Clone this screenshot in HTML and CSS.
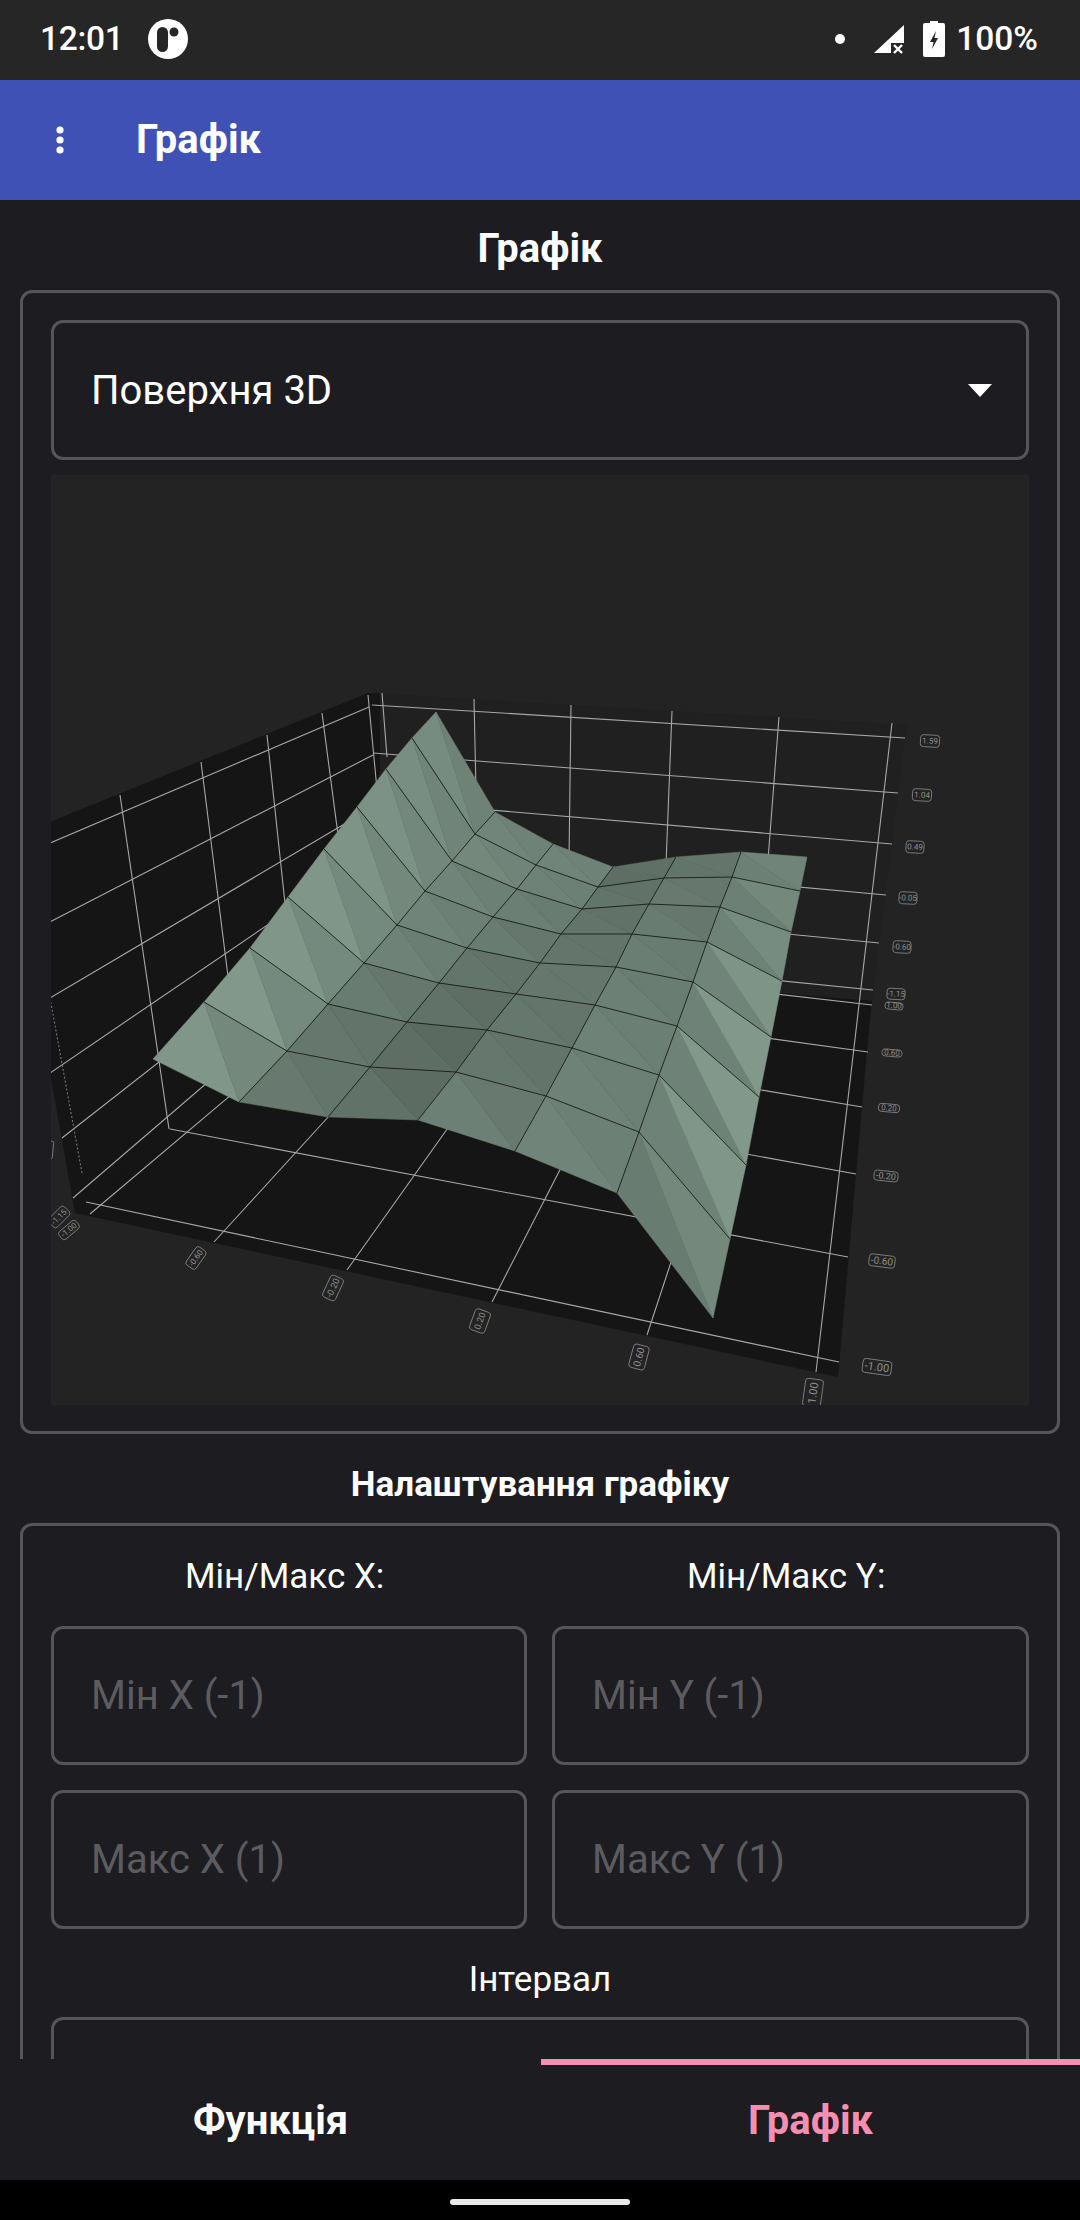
FILE: index.html
```html
<!DOCTYPE html>
<html lang="uk">
<head>
<meta charset="utf-8">
<title>Графік</title>
<link rel="stylesheet" href="styles.css">
</head>
<body>
<div class="phone">
  <header class="status">
    <div class="status-left">
      <span class="time">12:01</span>
      <svg class="logo" viewBox="0 0 40 40" width="40" height="40"><circle cx="20" cy="20" r="20" fill="#fff"/><rect x="9" y="8" width="11" height="25" rx="5.5" fill="#262626"/><circle cx="26" cy="13" r="4.5" fill="#262626"/></svg>
    </div>
    <div class="status-right">
      <svg class="dot" viewBox="0 0 10 10" width="10" height="10"><circle cx="5" cy="5" r="5" fill="#fff"/></svg>
      <svg class="signal" viewBox="0 0 32 30" width="32" height="30"><path d="M31 1 L1 29 H18 V19 H31 Z" fill="#fff"/><path d="M21 21 L29 29 M29 21 L21 29" stroke="#fff" stroke-width="2.4" fill="none"/></svg>
      <svg class="battery" viewBox="0 0 22 36" width="22" height="36"><path d="M7 0 H15 V2 H20 A2 2 0 0 1 22 4 V34 A2 2 0 0 1 20 36 H2 A2 2 0 0 1 0 34 V4 A2 2 0 0 1 2 2 H7 Z" fill="#fff"/><path d="M13 10 L7 21 H10.5 L9 28 L15 17 H11.5 Z" fill="#262626"/></svg>
      <span class="percent">100%</span>
    </div>
  </header>

  <div class="appbar">
    <svg class="menu" viewBox="0 0 8 28" width="8" height="28"><circle cx="4" cy="4" r="3.6" fill="#fff"/><circle cx="4" cy="14" r="3.6" fill="#fff"/><circle cx="4" cy="24" r="3.6" fill="#fff"/></svg>
    <span class="appbar-title">Графік</span>
  </div>

  <main class="content">
    <h1 class="page-title">Графік</h1>
    <section class="card chart-card">
      <div class="select">
        <span>Поверхня 3D</span>
        <span class="caret"></span>
      </div>
      <svg id="chart" class="chart" viewBox="51 475 978 930" width="978" height="930" xmlns="http://www.w3.org/2000/svg">
        <polygon class="wall-back" points="372,693 907,725 872,1001 372,958"/>
        <polygon class="wall-side" points="868,1040 838,1377 75,1213 372,958 872,1001"/>
        <polygon class="wall-side" points="50,822 368,693 380,693 380,958 75,1213 50,1073"/>

        <g class="grid">
          <path d="M50 843 L369 707 M50 922 L373 755 M50 998 L385 800 M50 1073 L385 845 M62 1138 L385 885 M73 1198 L385 930 M90 1214 L385 965"/>
          <path d="M120 795 L169 1129 M201 762 L236 1040 M267 735 L290 950 M322 713 L340 850 M368 695 L378 800"/>
          <path class="dim" d="M50 998 L82 1173"/>
          <path d="M170 1129 L848 1257 M86 1202 L839 1362"/>
          <path d="M418 1094 L856 1174 M418 1032 L862 1107 M418 990 L868 1052 M418 953 L872 1005"/>
          <path d="M214 1242 L330 1115 M347 1270 L450 1125 M492 1302 L565 1160 M647 1335 L675 1250"/>
          <path d="M372 705 L905 738 M373 753 L898 793 M373 800 L892 844 M373 848 L886 895 M373 893 L879 943 M373 940 L873 990"/>
          <path d="M382 693 L387 757 M474 699 L476 790 M571 705 L569 860 M672 711 L666 865 M779 717 L768 860 M892 723 L816 1372"/>
        </g>

        <g id="surface"></g>

        <g class="ticks">
          <g transform="translate(930 741) rotate(3)"><rect x="-9.5" y="-6" width="19" height="12" rx="3"/><text y="2.6">1.59</text></g>
          <g transform="translate(922 795) rotate(3)"><rect x="-9.5" y="-6" width="19" height="12" rx="3"/><text y="2.6">1.04</text></g>
          <g transform="translate(915 847) rotate(3)"><rect x="-9" y="-6" width="18" height="12" rx="3"/><text y="2.6">0.49</text></g>
          <g transform="translate(908 898) rotate(3)"><rect x="-9" y="-6" width="18" height="12" rx="3"/><text y="2.6">-0.05</text></g>
          <g transform="translate(902 947) rotate(3)"><rect x="-9" y="-6" width="18" height="12" rx="3"/><text y="2.6">-0.60</text></g>
          <g transform="translate(896 994) rotate(3)"><rect x="-9" y="-5.5" width="18" height="11" rx="3"/><text y="2.6">-1.15</text></g>
          <g transform="translate(894 1006) rotate(5)"><rect x="-9" y="-3.5" width="18" height="7" rx="3"/><text y="2">1.00</text></g>
          <g transform="translate(892 1053) rotate(5)"><rect x="-10" y="-3.5" width="20" height="7" rx="3"/><text y="2.4">0.60</text></g>
          <g transform="translate(889 1108) rotate(5)"><rect x="-10.5" y="-4" width="21" height="8" rx="3"/><text y="2.6">0.20</text></g>
          <g transform="translate(886 1176) rotate(6)"><rect x="-12" y="-5" width="24" height="10" rx="3"/><text class="t9" y="3">-0.20</text></g>
          <g transform="translate(882 1261) rotate(7)"><rect x="-13" y="-6" width="26" height="12" rx="3"/><text class="t10" y="3.4">-0.60</text></g>
          <g transform="translate(877 1367) rotate(8)"><rect x="-14.5" y="-7" width="29" height="14" rx="3"/><text class="t11" y="3.8">-1.00</text></g>
          <g transform="translate(50 1150) rotate(-85)"><rect x="-9" y="-3" width="18" height="6" rx="2"/></g>
          <g transform="translate(59 1217) rotate(-45)"><rect x="-11" y="-6" width="22" height="12" rx="3"/><text y="2.6">-1.15</text></g>
          <g transform="translate(69 1230) rotate(-40)"><rect x="-11" y="-5" width="22" height="10" rx="3"/><text y="2.6">-1.00</text></g>
          <g transform="translate(196 1258) rotate(-55)"><rect x="-11" y="-6" width="22" height="12" rx="3"/><text y="2.6">-0.60</text></g>
          <g transform="translate(333 1288) rotate(-65)"><rect x="-12" y="-7" width="24" height="14" rx="3"/><text class="t9" y="3">-0.20</text></g>
          <g transform="translate(480 1321) rotate(-70)"><rect x="-11" y="-8" width="22" height="16" rx="3"/><text class="t9" y="3">0.20</text></g>
          <g transform="translate(639 1357) rotate(-75)"><rect x="-12" y="-8" width="24" height="16" rx="3"/><text class="t10" y="3.4">0.60</text></g>
          <g transform="translate(813 1393) rotate(-82)"><rect x="-14" y="-9" width="28" height="18" rx="3"/><text class="t11" y="3.8">1.00</text></g>
        </g>
      </svg>
    </section>

    <h2 class="section-title">Налаштування графіку</h2>
    <section class="card settings-card">
      <div class="field-grid">
        <div class="field-label">Мін/Макс X: </div>
        <div class="field-label">Мін/Макс Y: </div>
        <div class="field">Мін X (-1)</div>
        <div class="field">Мін Y (-1)</div>
        <div class="field">Макс X (1)</div>
        <div class="field">Макс Y (1)</div>
      </div>
      <div class="interval-label">Інтервал</div>
      <div class="field field-wide"></div>
    </section>
  </main>

  <nav class="tabs">
    <div class="tab">Функція</div>
    <div class="tab active">Графік</div>
  </nav>
  <footer class="navbar"><span class="handle"></span></footer>
</div>
<script src="chart.js"></script>
</body>
</html>
```
FILE: styles.css
```css
* { box-sizing: border-box; margin: 0; padding: 0; }
html, body { width: 1080px; height: 2220px; overflow: hidden; background: #1c1c21; }
body { font-family: Roboto, "Noto Sans", sans-serif; color: #fff; }

.phone { width: 1080px; height: 2220px; display: flex; flex-direction: column; }

.status { height: 80px; flex: none; background: #262626; display: flex; justify-content: space-between; align-items: center; padding: 0 42px 2px 40px; }
.status-left, .status-right { display: flex; align-items: center; }
.time { font-size: 33.5px; font-weight: 500; letter-spacing: -0.3px; line-height: 36px; }
.logo { margin-left: 24px; }
.dot { margin-right: 28px; }
.signal { margin-right: 18px; }
.battery { margin-right: 11px; }
.percent { font-size: 33.5px; font-weight: 500; line-height: 36px; }

.appbar { height: 120px; flex: none; background: #3f51b5; display: flex; align-items: center; padding-left: 56px; }
.appbar-title { font-size: 40px; font-weight: 700; margin-left: 72px; line-height: 42px; }

.content { flex: 1; min-height: 0; overflow: hidden; padding: 0 20px; }
.page-title { font-size: 40px; font-weight: 700; text-align: center; line-height: 42px; padding: 28px 0 20px; }
.section-title { font-size: 35px; font-weight: 700; text-align: center; line-height: 38px; padding: 32px 0 19px; }

.card { border: 3px solid #55555a; border-radius: 12px; }
.chart-card { height: 1144px; padding: 27px 28px 26px; }
.settings-card { padding: 32px 28px 0; }

.select { height: 140px; border: 3px solid #55555a; border-radius: 12px; display: flex; align-items: center; justify-content: space-between; padding: 0 34px 0 37px; font-size: 40px; }
.caret { width: 0; height: 0; border-left: 12.5px solid transparent; border-right: 12.5px solid transparent; border-top: 13px solid #fff; }

.chart { display: block; margin-top: 15px; background: #232323; }
.wall-back { fill: #202020; }
.wall-side { fill: #151515; }
.grid path { fill: none; stroke: #a8a8a8; stroke-width: 1.1; }
.grid .dim { stroke: #777; stroke-dasharray: 2 2; }
.mesh-line { fill: none; stroke: #0c0f0d; stroke-width: 0.9; stroke-opacity: 0.85; }
.ticks rect { fill: none; stroke: #8a8a8a; stroke-width: 0.8; }
.ticks text { font-family: Roboto, sans-serif; font-size: 8px; fill: #909090; text-anchor: middle; }
.ticks .t9 { font-size: 9px; }
.ticks .t10 { font-size: 10px; }
.ticks .t11 { font-size: 11px; }

.field-grid { display: grid; grid-template-columns: 476px 477px; column-gap: 25px; row-gap: 25px; }
.field-label { font-size: 35px; line-height: 38px; text-align: center; white-space: pre; margin-bottom: 5px; }
.field { height: 139px; border: 3px solid #55555a; border-radius: 12px; display: flex; align-items: center; padding-left: 37px; font-size: 40px; color: #5c5c60; }
.interval-label { font-size: 35px; line-height: 38px; text-align: center; margin: 32px 0 18px; }

.tabs { height: 121px; flex: none; display: grid; grid-template-columns: 541px 539px; background: #1c1c21; }
.tab { font-size: 40px; font-weight: 700; display: flex; align-items: center; justify-content: center; padding-bottom: 4px; border-top: 6px solid transparent; }
.tab.active { color: #f48fb1; border-top-color: #f48fb1; }

.navbar { height: 40px; flex: none; background: #000; display: flex; justify-content: center; padding-top: 19px; }
.handle { width: 180px; height: 6px; border-radius: 3px; background: #e8e8e8; }
```
FILE: chart.js
```js
// 3D surface mesh: projected vertices (rows back to front, columns left to right).
var V = [
  [[436,712],[495,812],[553,844],[613,867],[676,857],[741,852],[807,857]],
  [[412,738],[475,834],[536,865],[598,887],[664,878],[732,877],[800,891]],
  [[386,769],[452,861],[517,889],[582,909],[649,904],[720,907],[791,932]],
  [[357,807],[425,891],[493,917],[561,934],[632,934],[707,942],[782,981]],
  [[324,849],[397,925],[467,948],[540,963],[616,967],[693,982],[771,1037]],
  [[288,897],[364,963],[439,983],[516,994],[595,1005],[677,1026],[759,1097]],
  [[250,948],[328,1004],[407,1022],[487,1030],[572,1048],[659,1075],[746,1165]],
  [[204,1002],[287,1051],[370,1067],[456,1072],[546,1096],[639,1132],[730,1239]],
  [[153,1059],[239,1102],[328,1117],[418,1120],[515,1151],[617,1193],[713,1318]]
];
// Green channel of the two triangles of every cell.
var S = [
  [[140,130],[133,130],[132,130],[110,112],[116,118],[128,132]],
  [[142,132],[136,132],[130,128],[116,114],[122,120],[128,136]],
  [[146,135],[132,128],[127,124],[116,114],[124,120],[130,140]],
  [[148,136],[132,128],[124,120],[118,116],[126,124],[132,148]],
  [[150,138],[130,126],[118,115],[120,120],[128,125],[130,152]],
  [[150,138],[124,120],[114,110],[120,118],[130,127],[130,152]],
  [[152,138],[120,116],[110,106],[120,117],[130,128],[130,150]],
  [[150,136],[122,118],[114,108],[128,122],[132,128],[124,136]]
];
var NS = "http://www.w3.org/2000/svg";
var group = document.getElementById("surface");
function pts(list) { return list.map(function (p) { return p.join(","); }).join(" "); }
function shade(g) { return "rgb(" + Math.round(g * 0.85) + "," + g + "," + Math.round(g * 0.915) + ")"; }
function add(tag, attrs) {
  var el = document.createElementNS(NS, tag);
  for (var k in attrs) el.setAttribute(k, attrs[k]);
  group.appendChild(el);
}
S.forEach(function (row, r) {
  row.forEach(function (cell, c) {
    var A = V[r][c], B = V[r][c + 1], C = V[r + 1][c + 1], D = V[r + 1][c];
    var f1 = shade(cell[0]), f2 = shade(cell[1]);
    add("polygon", { points: pts([A, C, D]), fill: f1, stroke: f1, "stroke-width": 0.5 });
    add("polygon", { points: pts([A, B, C]), fill: f2, stroke: f2, "stroke-width": 0.5 });
  });
});
for (var r = 1; r < 8; r++) add("polyline", { points: pts(V[r]), "class": "mesh-line" });
for (var c = 1; c < 6; c++) add("polyline", { points: pts(V.map(function (row) { return row[c]; })), "class": "mesh-line" });
```
